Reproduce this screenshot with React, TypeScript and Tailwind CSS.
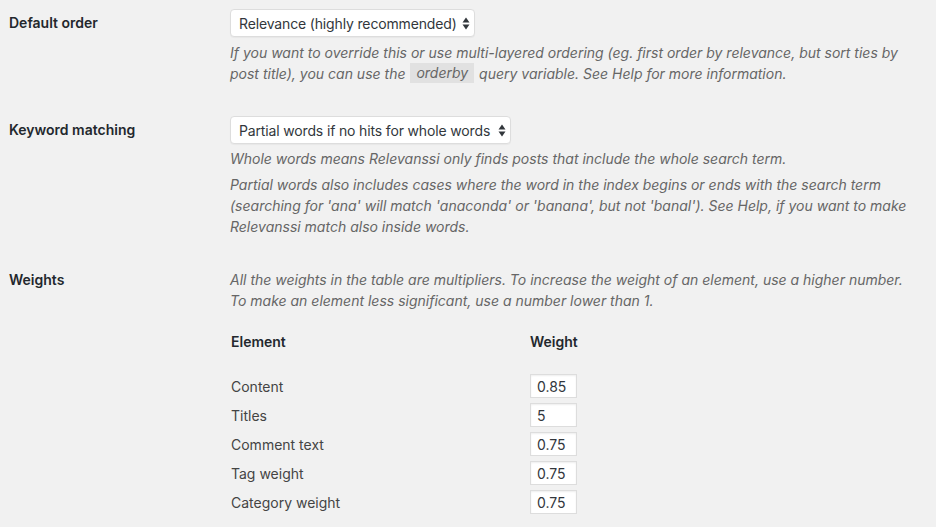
import type { ReactNode } from "react";

// ─── Relevanssi-style settings form ───────────────────────────────────────────

const font = "font-['Inter','Liberation_Sans',sans-serif]";

function SelectArrows() {
  return (
    <svg width="8" height="13" viewBox="0 0 8 13" className="shrink-0">
      <path d="M4 0.5 L7.5 5.5 H0.5 Z" fill="#32373c" />
      <path d="M4 12.5 L7.5 7.5 H0.5 Z" fill="#32373c" />
    </svg>
  );
}

function FakeSelect({ value, width }: { value: string; width: string }) {
  return (
    <div
      className={`${width} h-[28px] flex items-center justify-between bg-white border border-[#dddddd] rounded-[4px] pl-[8px] pr-[4px] text-[14px] text-[#32373c] shadow-[0_1px_1px_rgba(0,0,0,0.04)]`}
    >
      <span className="whitespace-nowrap tracking-[-0.15px]">{value}</span>
      <SelectArrows />
    </div>
  );
}

function Row({
  label,
  className,
  labelClass,
  children,
}: {
  label: string;
  className?: string;
  labelClass?: string;
  children: ReactNode;
}) {
  return (
    <div className={`flex ${className ?? ""}`}>
      <div
        className={`w-[230px] shrink-0 pl-[9px] text-[14px] font-semibold text-[#23282d] ${labelClass ?? "leading-[21px]"}`}
      >
        {label}
      </div>
      <div className="flex-1 min-w-0">{children}</div>
    </div>
  );
}

function Desc({ children, className }: { children: ReactNode; className?: string }) {
  return (
    <p className={`text-[14px] italic leading-[21px] text-[#666666] whitespace-nowrap ${className ?? ""}`}>
      {children}
    </p>
  );
}

const weights = [
  { name: "Content", value: "0.85" },
  { name: "Titles", value: "5" },
  { name: "Comment text", value: "0.75" },
  { name: "Tag weight", value: "0.75" },
  { name: "Category weight", value: "0.75" },
];

export default function App() {
  return (
    <div className={`${font} w-[936px] h-[527px] overflow-hidden bg-[#f1f1f1] pt-[9px]`}>
      {/* Default order */}
      <Row label="Default order" labelClass="leading-[28px]">
        <FakeSelect value="Relevance (highly recommended)" width="w-[245px]" />
        <Desc className="mt-[5px]">
          If you want to override this or use multi-layered ordering (eg. first order by relevance, but sort ties by
          <br />
          post title), you can use the{" "}
          <span className="inline-block leading-[20px] bg-[#e1e1e1] px-[6px] mx-[1px] align-top">
            <em className="italic">orderby</em>
          </span>{" "}
          query variable. See Help for more information.
        </Desc>
      </Row>

      {/* Keyword matching */}
      <Row label="Keyword matching" labelClass="leading-[28px]" className="mt-[32px]">
        <FakeSelect value="Partial words if no hits for whole words" width="w-[281px]" />
        <Desc className="mt-[4px]">Whole words means Relevanssi only finds posts that include the whole search term.</Desc>
        <Desc className="mt-[5px]">
          Partial words also includes cases where the word in the index begins or ends with the search term
          <br />
          (searching for 'ana' will match 'anaconda' or 'banana', but not 'banal'). See Help, if you want to make
          <br />
          Relevanssi match also inside words.
        </Desc>
      </Row>

      {/* Weights */}
      <Row label="Weights" className="mt-[32px]">
        <Desc>
          All the weights in the table are multipliers. To increase the weight of an element, use a higher number.
          <br />
          To make an element less significant, use a number lower than 1.
        </Desc>
        <div className="mt-[21px] pl-[1px] flex text-[14px] font-semibold text-[#23282d] leading-[20px]">
          <div className="w-[299px]">Element</div>
          <div>Weight</div>
        </div>
        <div className="mt-[22px] flex flex-col gap-[5px]">
          {weights.map((w) => (
            <div key={w.name} className="flex items-center h-[24px]">
              <div className="w-[300px] pl-[1px] text-[14px] text-[#444444]">{w.name}</div>
              <div className="w-[47px] h-[24px] bg-white border border-[#dddddd] shadow-[inset_0_1px_2px_rgba(0,0,0,0.07)] pl-[6px] flex items-center text-[14px] text-[#32373c]">
                {w.value}
              </div>
            </div>
          ))}
        </div>
      </Row>
    </div>
  );
}
